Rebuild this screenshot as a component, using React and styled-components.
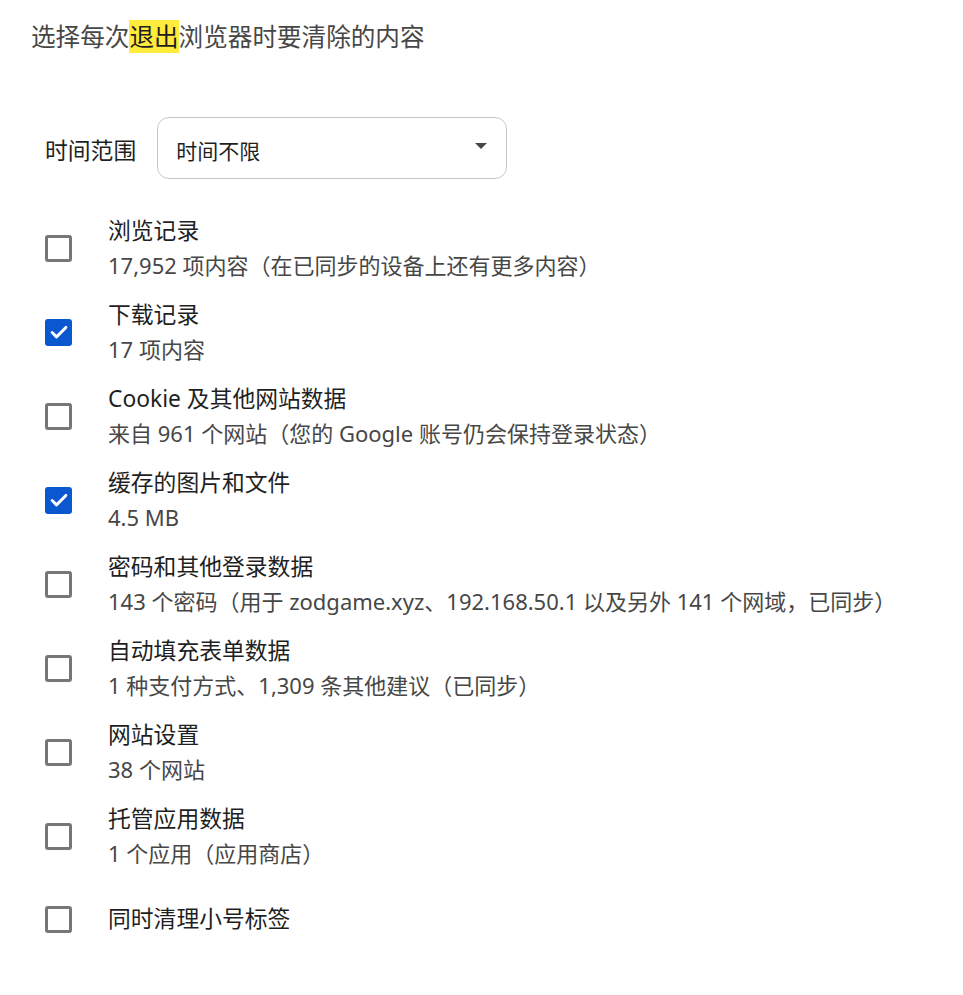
import React from 'react';
import styled, { createGlobalStyle } from 'styled-components';

const GlobalStyle = createGlobalStyle`
  body {
    margin: 0;
    background: #ffffff;
    font-family: "Noto Sans", "Noto Sans CJK SC", sans-serif;
  }
`;

const Page = styled.div`
  display: flex;
  flex-direction: column;
  padding: 20px 0 0 31px;
`;

const Title = styled.div`
  font-size: 24.6px;
  line-height: 34px;
  color: #474747;
`;

const Mark = styled.mark`
  background: #ffeb3b;
  color: #1f1f1f;
`;

const RangeRow = styled.div`
  display: flex;
  align-items: center;
  gap: 21px;
  margin-top: 63px;
  padding-left: 14px;
`;

const RangeLabel = styled.div`
  font-size: 22.8px;
  color: #1f1f1f;
  padding-top: 3px;
`;

const Select = styled.div`
  width: 350px;
  height: 62px;
  box-sizing: border-box;
  border: 1px solid #c7c7c7;
  border-radius: 12px;
  display: flex;
  align-items: center;
  justify-content: space-between;
  padding: 3px 19px 0 18px;
  font-size: 21px;
  color: #1f1f1f;
`;

const Arrow = styled.span`
  width: 0;
  height: 0;
  border-left: 6px solid transparent;
  border-right: 6px solid transparent;
  border-top: 6px solid #474747;
  margin-top: -7px;
`;

const List = styled.div`
  display: flex;
  flex-direction: column;
  gap: 16px;
  margin-top: 35px;
`;

const Row = styled.label`
  display: flex;
  align-items: center;
  gap: 36px;
  padding-left: 14px;
  margin-top: ${p => (p.$extra ? '16px' : '0')};
`;

const Box = styled.span`
  width: 27px;
  height: 27px;
  box-sizing: border-box;
  border-radius: 3px;
  flex-shrink: 0;
  display: flex;
  align-items: center;
  justify-content: center;
  border: ${p => (p.$checked ? 'none' : '3px solid #747775')};
  background: ${p => (p.$checked ? '#0b57d0' : 'transparent')};
`;

const Texts = styled.div`
  display: flex;
  flex-direction: column;
`;

const Label = styled.div`
  font-size: 22.8px;
  line-height: 34px;
  color: #1f1f1f;
`;

const Sub = styled.div`
  font-size: 22px;
  line-height: 34px;
  color: #474747;
`;

const Check = () => (
  <svg width="22" height="22" viewBox="0 0 24 24">
    <path d="M4.5 12.5l4.8 4.8L19.5 7" fill="none" stroke="#fff" strokeWidth="3.2" strokeLinecap="round" strokeLinejoin="round" />
  </svg>
);

const items = [
  { label: '浏览记录', sub: '17,952 项内容（在已同步的设备上还有更多内容）' },
  { label: '下载记录', sub: '17 项内容', checked: true },
  { label: 'Cookie 及其他网站数据', sub: '来自 961 个网站（您的 Google 账号仍会保持登录状态）' },
  { label: '缓存的图片和文件', sub: '4.5 MB', checked: true },
  { label: '密码和其他登录数据', sub: '143 个密码（用于 zodgame.xyz、192.168.50.1 以及另外 141 个网域，已同步）' },
  { label: '自动填充表单数据', sub: '1 种支付方式、1,309 条其他建议（已同步）' },
  { label: '网站设置', sub: '38 个网站' },
  { label: '托管应用数据', sub: '1 个应用（应用商店）' },
  { label: '同时清理小号标签', extra: true },
];

export default function App() {
  return (
    <>
      <GlobalStyle />
      <Page>
        <Title>
          选择每次<Mark>退出</Mark>浏览器时要清除的内容
        </Title>
        <RangeRow>
          <RangeLabel>时间范围</RangeLabel>
          <Select>
            <span>时间不限</span>
            <Arrow />
          </Select>
        </RangeRow>
        <List>
          {items.map(it => (
            <Row key={it.label} $extra={it.extra}>
              <Box $checked={it.checked}>{it.checked && <Check />}</Box>
              <Texts>
                <Label>{it.label}</Label>
                {it.sub && <Sub>{it.sub}</Sub>}
              </Texts>
            </Row>
          ))}
        </List>
      </Page>
    </>
  );
}
